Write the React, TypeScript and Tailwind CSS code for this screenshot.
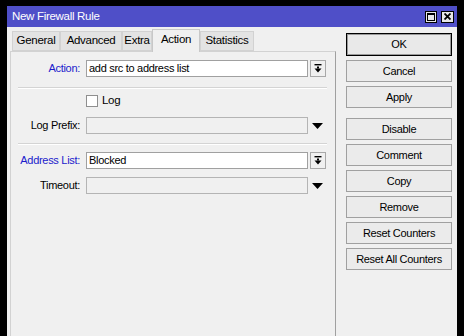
import React from "react";

function DropBtn() {
  return (
    <div className="ml-[2px] w-[16px] h-[17px] border border-[#a8a8a8] bg-[#f0f0f0] flex items-center justify-center">
      <svg width="8" height="9" viewBox="0 0 8 9">
        <rect x="0.5" y="0" width="7" height="1.4" fill="#000" />
        <rect x="3" y="2.5" width="2" height="2" fill="#000" />
        <path d="M0.5 4.5 H7.5 L4 8.5 Z" fill="#000" />
      </svg>
    </div>
  );
}

function Tri() {
  return (
    <div className="ml-[4px] w-[14px] h-[17px] flex items-center justify-start">
      <svg width="11" height="6" viewBox="0 0 11 6">
        <path d="M0 0 H11 L5.5 6 Z" fill="#000" />
      </svg>
    </div>
  );
}

function Sep({ mt }: { mt: string }) {
  return <div className={`${mt} ml-[7px] w-[309px] border-t border-[#d4d4d4] border-b border-b-white`} />;
}

const tabs = [
  { t: "General", w: "w-[48px]" },
  { t: "Advanced", w: "w-[62px]" },
  { t: "Extra", w: "w-[30px]" },
  { t: "Action", w: "w-[48px]", active: true },
  { t: "Statistics", w: "w-[54px]" },
];

const btns: { t: string; mt?: string; def?: boolean }[] = [
  { t: "OK", def: true },
  { t: "Cancel" },
  { t: "Apply" },
  { t: "Disable", mt: "mt-[6px]" },
  { t: "Comment" },
  { t: "Copy" },
  { t: "Remove" },
  { t: "Reset Counters" },
  { t: "Reset All Counters" },
];

export default function App() {
  return (
    <div className="w-[464px] h-[336px] bg-black pt-[6px] pl-[7px] pr-[7px] overflow-hidden font-['Liberation_Sans',Arial,sans-serif] text-[11px] tracking-[-0.3px] text-black leading-none">
      <div className="h-[330px] bg-[#f0f0f0] flex flex-col">
        <div className="h-[21px] bg-[#4f4fc8] flex items-center pl-[5px] pr-[3px] text-white">
          <span className="flex-1 text-[11.5px] tracking-[-0.3px]">New Firewall Rule</span>
          <div className="w-[12px] h-[12px] bg-[#e8e8e8] border border-black flex items-center justify-center">
            <div className="w-[8px] h-[8px] border border-black border-t-2" />
          </div>
          <div className="ml-[4px] w-[13px] h-[12px] bg-[#e8e8e8] border border-black flex items-center justify-center">
            <svg width="7" height="7" viewBox="0 0 7 7">
              <path d="M0.5 0.5 L6.5 6.5 M6.5 0.5 L0.5 6.5" stroke="#000" strokeWidth="1.8" />
            </svg>
          </div>
        </div>
        <div className="flex flex-1">
          <div className="ml-[3px] w-[326px] flex flex-col">
            <div className="h-[24px] pl-[2px] flex items-end relative z-10">
              {tabs.map((tb) =>
                tb.active ? (
                  <div
                    key={tb.t}
                    className={`${tb.w} h-[23px] -mb-[1px] bg-[#f0f0f0] border border-b-0 border-[#c8c8c8] flex items-center justify-center pb-[2px] text-[11.5px]`}
                  >
                    {tb.t}
                  </div>
                ) : (
                  <div
                    key={tb.t}
                    className={`${tb.w} h-[20px] bg-[#e3e3e3] border border-[#d2d2d2] flex items-center justify-center text-[11.5px]`}
                  >
                    {tb.t}
                  </div>
                )
              )}
            </div>
            <div className="flex-1 border border-[#d2d2d2] border-r-[#a0a0a0] border-b-0 flex flex-col">
              <div className="mt-[8px] flex items-center">
                <div className="w-[69px] text-right text-[#1b1bcc]">Action:</div>
                <div className="ml-[6px] w-[222px] h-[17px] bg-white border border-[#a0a0a0] flex items-center pl-[2px]">
                  add src to address list
                </div>
                <DropBtn />
              </div>
              <Sep mt="mt-[10px]" />
              <div className="mt-[6px] flex items-center h-[12px]">
                <div className="ml-[75px] w-[12px] h-[12px] bg-white border border-[#8f8f8f]" />
                <span className="ml-[4px] text-[11.5px]">Log</span>
              </div>
              <div className="mt-[10px] flex items-center">
                <div className="w-[69px] text-right">Log Prefix:</div>
                <div className="ml-[6px] w-[222px] h-[17px] bg-[#f0f0f0] border border-[#b4b4b4]" />
                <Tri />
              </div>
              <Sep mt="mt-[9px]" />
              <div className="mt-[7px] flex items-center">
                <div className="w-[69px] text-right text-[#1b1bcc]">Address List:</div>
                <div className="ml-[6px] w-[222px] h-[17px] bg-white border border-[#a0a0a0] flex items-center pl-[2px]">
                  Blocked
                </div>
                <DropBtn />
              </div>
              <div className="mt-[8px] flex items-center">
                <div className="w-[69px] text-right">Timeout:</div>
                <div className="ml-[6px] w-[222px] h-[17px] bg-[#f0f0f0] border border-[#b4b4b4]" />
                <Tri />
              </div>
            </div>
          </div>
          <div className="ml-[10px] w-[106px] pt-[6px] flex flex-col gap-[4px]">
            {btns.map((b) =>
              b.def ? (
                <div key={b.t} className="h-[23px] border border-black bg-[#e9e9e9] flex items-center justify-center">
                  <div className="w-full h-full border border-[#9a9a9a] flex items-center justify-center">{b.t}</div>
                </div>
              ) : (
                <div
                  key={b.t}
                  className={`${b.mt ?? ""} h-[22px] border border-[#a0a0a0] bg-[#ebebeb] flex items-center justify-center`}
                >
                  {b.t}
                </div>
              )
            )}
          </div>
        </div>
      </div>
    </div>
  );
}
